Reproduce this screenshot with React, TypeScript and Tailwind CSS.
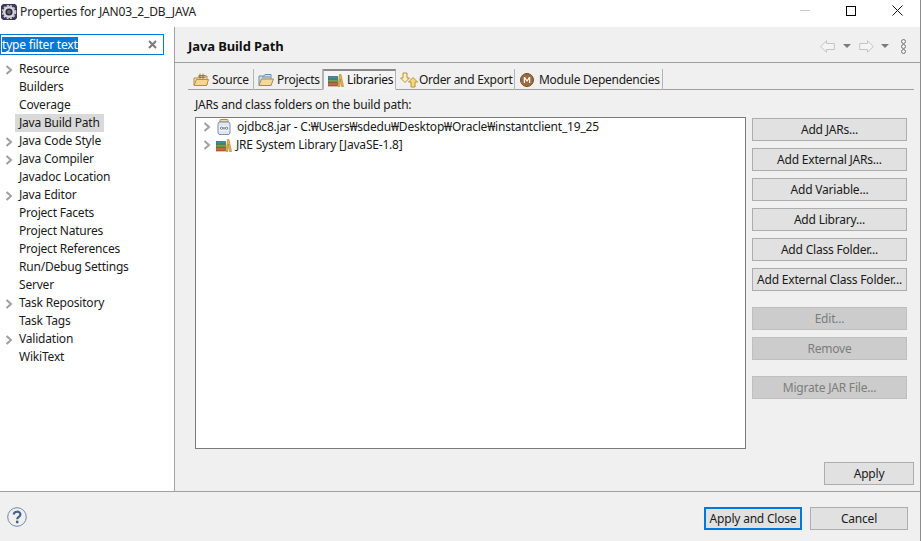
import React from "react";

const FONT = "font-['Noto_Sans','Noto_Sans_CJK_KR',sans-serif]";

const treeItems = [
  { label: "Resource", arrow: true },
  { label: "Builders" },
  { label: "Coverage" },
  { label: "Java Build Path", selected: true },
  { label: "Java Code Style", arrow: true },
  { label: "Java Compiler", arrow: true },
  { label: "Javadoc Location" },
  { label: "Java Editor", arrow: true },
  { label: "Project Facets" },
  { label: "Project Natures" },
  { label: "Project References" },
  { label: "Run/Debug Settings" },
  { label: "Server" },
  { label: "Task Repository", arrow: true },
  { label: "Task Tags" },
  { label: "Validation", arrow: true },
  { label: "WikiText" },
];

const Chevron = () => (
  <svg width="8" height="10" viewBox="0 0 8 10" className="shrink-0">
    <path d="M1.5 1 L6 5 L1.5 9" fill="none" stroke="#a0a0a0" strokeWidth="2" />
  </svg>
);

const GearIcon = () => (
  <svg width="16" height="16" viewBox="0 0 16 16" className="shrink-0">
    <path d="M0 2 L2 0 H14 L16 2 V14 L14 16 H2 L0 14 Z" fill="#3d3560" />
    <circle cx="8" cy="8" r="6" fill="#d8d8d8" />
    <circle cx="8" cy="8" r="6.4" fill="none" stroke="#c8c8c8" strokeWidth="1.6" strokeDasharray="2 1.4" />
    <circle cx="8" cy="8" r="3.6" fill="#2c2a3a" />
    <circle cx="8" cy="8" r="2" fill="#6a6880" />
  </svg>
);

const SourceIcon = () => (
  <svg width="16" height="14" viewBox="0 0 16 14" className="shrink-0">
    <path d="M1 5 H5 L6 3 H14 V12 H1 Z" fill="#f3dfb0" stroke="#b58d4c" />
    <path d="M1 12.5 L3.5 6.5 H15.5 L13.5 12.5 Z" fill="#f6d590" stroke="#b58d4c" />
    <path d="M7 0.5 V6 M10 0.5 V6 M5.5 2.5 H12.5 M5.5 4.5 H12.5" stroke="#8a6a3a" strokeWidth="0.8" fill="none" />
  </svg>
);

const FolderIcon = () => (
  <svg width="16" height="14" viewBox="0 0 16 14" className="shrink-0">
    <path d="M1 3 H6 L7 1.5 H13 V12.5 H1 Z" fill="#cfe0ee" stroke="#6d8ba6" />
    <path d="M1 12.5 L3.5 6 H15.5 L13 12.5 Z" fill="#f3d9a0" stroke="#a98a4e" />
    <path d="M4 4 H12" stroke="#5f8fb8" />
  </svg>
);

const LibraryIcon = () => (
  <svg width="16" height="13" viewBox="0 0 16 13" className="shrink-0">
    <rect x="0.5" y="2.5" width="9" height="2.6" fill="#3f8f9f" stroke="#24505c" strokeWidth="0.6" />
    <rect x="0.5" y="5.3" width="9" height="2.8" fill="#6aa84f" stroke="#3c6a2a" strokeWidth="0.6" />
    <rect x="0.5" y="8.5" width="9" height="3.5" fill="#c46a32" stroke="#7c3f1c" strokeWidth="0.6" />
    <path d="M10 12.5 L11.5 0.5 H13 L15.5 12.5 H13.5 L12.2 5 L11.8 12.5 Z" fill="#e8b850" stroke="#a67c2c" strokeWidth="0.6" />
  </svg>
);

const OrderIcon = () => (
  <svg width="18" height="16" viewBox="0 0 18 16" className="shrink-0">
    <path d="M3 1 H7 V6 H9.5 L5 10.5 L0.5 6 H3 Z" fill="#fbeec4" stroke="#b8923c" />
    <path d="M11 15 H15 V10 H17.5 L13 5.5 L8.5 10 H11 Z" fill="#fad77a" stroke="#b8923c" />
  </svg>
);

const ModuleIcon = () => (
  <svg width="14" height="14" viewBox="0 0 14 14" className="shrink-0">
    <circle cx="7" cy="7" r="6.5" fill="#9c6a3c" />
    <circle cx="7" cy="7" r="6.5" fill="none" stroke="#7a4e28" />
    <path d="M3.8 10 V4 H5 L7 7 L9 4 H10.2 V10 H9 V6.2 L7 9 L5 6.2 V10 Z" fill="#ffffff" />
  </svg>
);

const JarIcon = () => (
  <svg width="14" height="16" viewBox="0 0 14 16" className="shrink-0">
    <rect x="3" y="0.5" width="8" height="2.5" rx="0.8" fill="#f0d9a4" stroke="#a98a4e" />
    <path d="M2 3 H12 L13 5 V14 L12 15.5 H2 L1 14 V5 Z" fill="#dfe7f2" stroke="#7f90a8" />
    <rect x="2.5" y="7" width="9" height="4.5" fill="#ffffff" />
    <circle cx="4.6" cy="9.2" r="1.2" fill="none" stroke="#47566e" strokeWidth="0.8" />
    <path d="M7 8 V10.5" stroke="#47566e" />
    <circle cx="9.6" cy="9.2" r="1.2" fill="none" stroke="#47566e" strokeWidth="0.8" />
  </svg>
);

const ToolbarArrow = ({ flip }: { flip?: boolean }) => (
  <svg width="15" height="13" viewBox="0 0 15 13" className={flip ? "shrink-0 -scale-x-100" : "shrink-0"}>
    <path d="M0.7 6.5 L6.5 0.8 V3.5 H14.3 V9.5 H6.5 V12.2 Z" fill="#f4f4f4" stroke="#c4c4c4" />
  </svg>
);

const DropCaret = () => (
  <svg width="8" height="4" viewBox="0 0 8 4" className="block shrink-0">
    <path d="M0 0 H8 L4 4 Z" fill="#7a7a7a" />
  </svg>
);

const tabs = [
  { label: "Source", icon: <SourceIcon />, w: "w-[66px] pl-[5px]" },
  { label: "Projects", icon: <FolderIcon />, w: "w-[69px] pl-[4px]" },
  { label: "Libraries", icon: <LibraryIcon />, w: "w-[73px] pl-[4px]", active: true },
  { label: "Order and Export", icon: <OrderIcon />, w: "w-[119px] pl-[4px]" },
  { label: "Module Dependencies", icon: <ModuleIcon />, w: "w-[148px] pl-[5px]" },
];

const SideButton = ({ label, disabled, className }: { label: string; disabled?: boolean; className?: string }) => (
  <div
    className={`h-[23px] w-[155px] flex items-center justify-center border ${
      disabled ? "bg-[#cccccc] border-[#bfbfbf] text-[#7d7d7d]" : "border-[#adadad] bg-[#e1e1e1] text-[#1a1a1a]"
    } ${className ?? ""}`}
  >
    {label}
  </div>
);

export default function App() {
  return (
    <div className={`${FONT} relative w-[921px] h-[541px] overflow-hidden bg-[#f0f0f0] text-[12px] leading-[18px] tracking-[-0.2px] text-[#1a1a1a] flex flex-col border-r border-[#8c8c8c]`}>
      {/* title bar */}
      <div className="h-[27px] shrink-0 bg-white flex items-center pl-[1px]">
        <div className="mt-[-4px] flex items-center gap-[3px]">
          <GearIcon />
          <span className="text-[#222222] tracking-[-0.13px]">Properties for JAN03_2_DB_JAVA</span>
        </div>
        <div className="ml-auto flex items-center mt-[-6px]">
          <div className="w-[46px] flex justify-center">
            <div className="w-[10px] h-[1px] bg-[#c8c8c8]" />
          </div>
          <div className="w-[46px] flex justify-center">
            <div className="w-[10px] h-[10px] border border-black" />
          </div>
          <div className="w-[46px] flex justify-center">
            <svg width="11" height="11" viewBox="0 0 11 11">
              <path d="M0.5 0.5 L10.5 10.5 M10.5 0.5 L0.5 10.5" stroke="#111111" strokeWidth="1" />
            </svg>
          </div>
        </div>
      </div>

      <div className="flex flex-1 min-h-0">
        {/* left tree */}
        <aside className="w-[175px] shrink-0 bg-white border-r border-[#a0a0a0] pt-[7px]">
          <div className="w-[164px] h-[21px] border-[1.5px] border-[#0078d7] flex items-center pl-[1px] pr-[6px]">
            <span className="bg-[#0078d7] text-white leading-[15px]">type filter text</span>
            <svg width="9" height="9" viewBox="0 0 9 9" className="ml-auto">
              <path d="M1 1 L8 8 M8 1 L1 8" stroke="#7a7a7a" strokeWidth="2" />
            </svg>
          </div>
          <ul className="mt-[5px]">
            {treeItems.map((item) => (
              <li key={item.label} className="h-[18px] flex items-center">
                <span className="w-[15px] flex justify-center pl-[2px] pt-[2px]">{item.arrow && <Chevron />}</span>
                <span className={`px-[4px] ${item.selected ? "bg-[#d9d9d9]" : ""}`}>{item.label}</span>
              </li>
            ))}
          </ul>
        </aside>

        {/* right page */}
        <main className="flex-1 min-w-0 flex flex-col">
          <header className="h-[36px] shrink-0 border-b border-[#a0a0a0] flex items-center pl-[13px] pr-[14px]">
            <h1 className="font-bold text-[13px] tracking-[-0.1px] text-[#111111] mt-[3px]">Java Build Path</h1>
            <div className="ml-auto flex items-center mt-[3px]">
              <ToolbarArrow />
              <span className="ml-[8px]"><DropCaret /></span>
              <span className="ml-[8px]"><ToolbarArrow flip /></span>
              <span className="ml-[7px]"><DropCaret /></span>
              <div className="ml-[12px] flex flex-col">
                <span className="w-[5px] h-[5px] rounded-full border border-[#777777]" />
                <span className="w-[5px] h-[5px] rounded-full border border-[#777777]" />
                <span className="w-[5px] h-[5px] rounded-full border border-[#777777]" />
              </div>
            </div>
          </header>

          <div className="pl-[13px] pr-[6px] pt-[6px] flex-1 flex flex-col min-h-0">
            {/* tabs */}
            <div className="h-[21px] shrink-0 flex border-b border-[#a0a0a0]">
              {tabs.map((t) => (
                <div
                  key={t.label}
                  className={`${t.w} h-[21px] flex items-center border-r border-[#b4b4b4] tracking-[-0.28px] ${
                    t.active ? "bg-[#f4f4f4] border-t-2 border-t-[#8a8a8a] border-l border-l-[#b4b4b4] border-b border-b-[#f4f4f4] text-[#111111]" : ""
                  }`}
                >
                  <span className="w-[19px] shrink-0 flex items-center">{t.icon}</span>
                  <span>{t.label}</span>
                </div>
              ))}
            </div>

            <p className="mt-[6px] ml-[7px] h-[18px] shrink-0">JARs and class folders on the build path:</p>

            <div className="mt-[3px] ml-[7px] flex gap-[6px]">
              <div className="w-[551px] h-[332px] bg-white border border-[#7a7a7a]">
                <div className="h-[18px] flex items-center pl-[7px]">
                  <Chevron />
                  <span className="ml-[6px]"><JarIcon /></span>
                  <span className="ml-[6px]">ojdbc8.jar - C:₩Users₩sdedu₩Desktop₩Oracle₩instantclient_19_25</span>
                </div>
                <div className="h-[18px] flex items-center pl-[7px]">
                  <Chevron />
                  <span className="ml-[5px]"><LibraryIcon /></span>
                  <span className="ml-[4px]">JRE System Library [JavaSE-1.8]</span>
                </div>
              </div>
              <div className="flex flex-col pt-[1px]">
                <div className="flex flex-col gap-[7px]">
                  <SideButton label="Add JARs..." />
                  <SideButton label="Add External JARs..." />
                  <SideButton label="Add Variable..." />
                  <SideButton label="Add Library..." />
                  <SideButton label="Add Class Folder..." />
                  <SideButton label="Add External Class Folder..." />
                </div>
                <SideButton label="Edit..." disabled className="mt-[16px]" />
                <SideButton label="Remove" disabled className="mt-[7px]" />
                <SideButton label="Migrate JAR File..." disabled className="mt-[16px]" />
              </div>
            </div>

            <div className="mt-[13px] flex justify-end">
              <div className="w-[90px] h-[23px] flex items-center justify-center border border-[#adadad] bg-[#e1e1e1]">Apply</div>
            </div>
          </div>
        </main>
      </div>

      {/* footer */}
      <footer className="h-[50px] shrink-0 border-t border-[#a0a0a0] flex items-start pt-[15px] pl-[7px] pr-[12px]">
        <svg width="20" height="20" viewBox="0 0 20 20">
          <circle cx="10" cy="10" r="9.3" fill="none" stroke="#6f86a8" strokeWidth="1" />
          <path d="M6.8 7.6 C6.8 3.8 13.4 3.8 13.4 7.4 C13.4 9.8 10.2 9.8 10.2 12.2" fill="none" stroke="#4a6088" strokeWidth="2.2" />
          <circle cx="10.2" cy="15" r="1.4" fill="#4a6088" />
        </svg>
        <div className="ml-auto flex gap-[8px]">
          <div className="w-[98px] h-[23px] flex items-center justify-center border-2 border-[#0078d7] bg-[#e1e1e1]">Apply and Close</div>
          <div className="w-[98px] h-[23px] flex items-center justify-center border border-[#adadad] bg-[#e1e1e1]">Cancel</div>
        </div>
      </footer>
    </div>
  );
}
